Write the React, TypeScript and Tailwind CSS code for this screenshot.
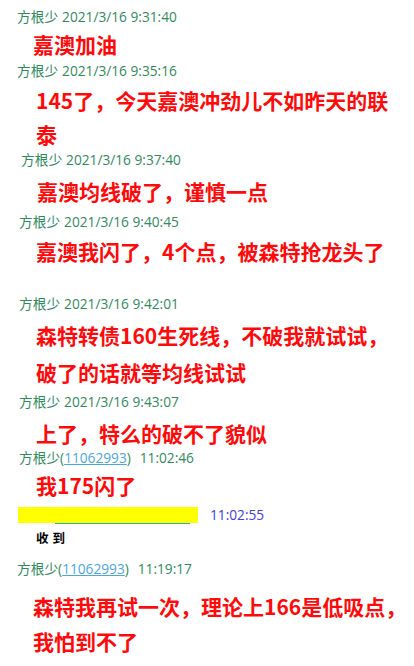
import React from "react";

const F = { fontFamily: '"Open Sans", "Noto Sans CJK SC", sans-serif' };
const M = { fontFamily: '"Noto Sans CJK SC", sans-serif' };

function Header({ x, time, id }: { x: string; time: string; id?: boolean }) {
  return (
    <div className={`h-[18px] flex items-center text-[13.7px] leading-[18px] text-[#2f8a5c] ${x}`} style={F}>
      <span>方根少</span>
      {id ? (
        <>
          <span>(</span>
          <span className="text-[#4aa8dc] underline">11062993</span>
          <span>)</span>
          <span className="ml-[9px] font-medium">{time}</span>
        </>
      ) : (
        <span className="ml-[4px]">2021/3/16 {time}</span>
      )}
    </div>
  );
}

function Msg({ x, lh, children }: { x: string; lh: string; children: React.ReactNode }) {
  return (
    <div className={`text-[21px] font-bold text-[#ff0a0a] ${x} ${lh}`} style={M}>
      {children}
    </div>
  );
}

export default function App() {
  return (
    <div className="w-[414px] h-[666px] bg-white overflow-hidden">
      <div className="pt-[8px]">
        <Header x="pl-[17px]" time="9:31:40" />
        <div className="mt-[4px]"><Msg x="pl-[33px]" lh="leading-[28px]">嘉澳加油</Msg></div>
        <div className="mt-[4px]"><Header x="pl-[17px]" time="9:35:16" /></div>
        <div className="mt-[3px]">
          <Msg x="pl-[36px] pr-[20px]" lh="leading-[34px]">145了，今天嘉澳冲劲儿不如昨天的联<br />泰</Msg>
        </div>
        <Header x="pl-[21px]" time="9:37:40" />
        <div className="mt-[8px]"><Msg x="pl-[37px]" lh="leading-[28px]">嘉澳均线破了，谨慎一点</Msg></div>
        <div className="mt-[8px]"><Header x="pl-[19px]" time="9:40:45" /></div>
        <div className="mt-[6px]"><Msg x="pl-[36px]" lh="leading-[28px]">嘉澳我闪了，4个点，被森特抢龙头了</Msg></div>
        <div className="mt-[30px]"><Header x="pl-[19px]" time="9:42:01" /></div>
        <div className="mt-[4px]">
          <Msg x="pl-[36px]" lh="leading-[37px]">森特转债160生死线，不破我就试试，<br />破了的话就等均线试试</Msg>
        </div>
        <div className="mt-[2px]"><Header x="pl-[19px]" time="9:43:07" /></div>
        <div className="mt-[7px]"><Msg x="pl-[36px]" lh="leading-[31px]">上了，特么的破不了貌似</Msg></div>
        <div className="mt-[0px]"><Header x="pl-[19px]" time="11:02:46" id /></div>
        <div className="mt-[4px]"><Msg x="pl-[36px]" lh="leading-[28px]">我175闪了</Msg></div>
        <div className="mt-[7px] h-[18px] flex items-center pl-[18px]">
          <div className="relative w-[180px] h-[16px]">
            <div className="absolute left-[37px] bottom-[-1px] w-[135px] h-[1px] bg-[#22b5a5]" />
            <div className="absolute inset-0 bg-[#ffff00]" />
          </div>
          <span className="ml-[12px] text-[13.7px] text-[#4040e0]" style={F}>11:02:55</span>
        </div>
        <div className="mt-[6px] pl-[36px] h-[16px] leading-[16px] text-[12.5px] font-bold text-black tracking-[4px]" style={M}>收到</div>
        <div className="mt-[14px]"><Header x="pl-[17px]" time="11:19:17" id /></div>
        <div className="mt-[11px]">
          <Msg x="pl-[33px]" lh="leading-[35px]">森特我再试一次，理论上166是低吸点，<br />我怕到不了</Msg>
        </div>
      </div>
    </div>
  );
}
